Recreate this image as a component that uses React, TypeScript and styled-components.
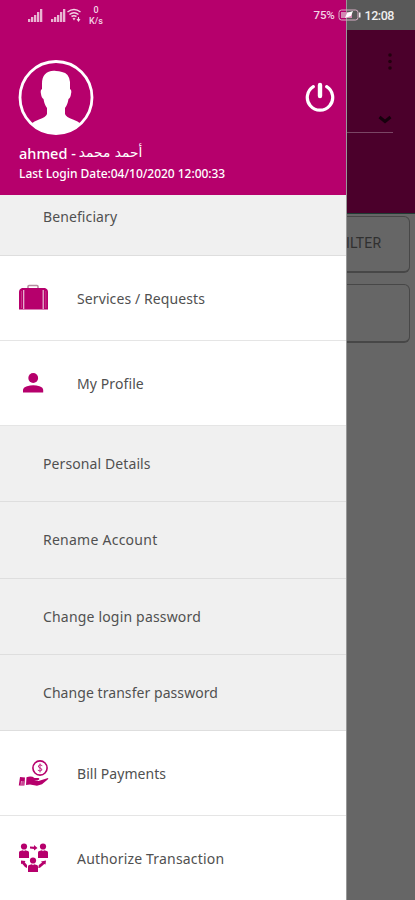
import React from 'react';
import styled, { createGlobalStyle } from 'styled-components';

const Global = createGlobalStyle`
  * { box-sizing: border-box; }
  body { margin: 0; font-family: "Noto Sans", "Open Sans", sans-serif; }
  svg { display: block; flex: none; }
`;

const brand = '#b6006c';

const Screen = styled.div`
  position: relative;
  width: 415px;
  height: 900px;
  overflow: hidden;
  background: #666;
`;

const StatusBar = styled.div`
  position: absolute;
  z-index: 3;
  inset: 0 0 auto 0;
  height: 30px;
  padding: 0 21px 0 28px;
  display: flex;
  align-items: center;
  color: #f3d4e5;
  font-family: Roboto, sans-serif;
`;
const Speed = styled.div`
  width: 18px;
  margin-left: 4px;
  font-size: 9px;
  font-weight: 500;
  line-height: 11px;
  text-align: center;
  padding-top: 1px;
`;
const Battery = styled.div`
  margin-left: auto;
  font-size: 11.5px;
  font-weight: 500;
  letter-spacing: -0.2px;
  margin-right: 3px;
`;
const Clock = styled.div`
  margin-left: 4px;
  font-size: 12.5px;
  font-weight: 500;
  letter-spacing: -0.45px;
  color: #eee;
`;

const Backdrop = styled.div`
  height: 100%;
  padding-left: 347px;
  display: flex;
  flex-direction: column;
`;
const DimStatus = styled.div`
  height: 30px;
  background: #595959;
`;
const DimToolbar = styled.div`
  height: 184px;
  background: #4b002b;
  border-bottom: 1px solid #203b33;
  display: flex;
  flex-direction: column;
`;
const MenuDots = styled.div`
  padding: 22px 0 0 40px;
`;
const SelectLine = styled.div`
  width: 46px;
  height: 29px;
  margin-top: 34px;
  padding: 11px 0 0 31px;
  border-bottom: 1px solid #7a4665;
`;
const DimCard = styled.div<{ $top: number; $height: number }>`
  width: 63px;
  height: ${p => p.$height}px;
  margin-top: ${p => p.$top}px;
  border: 1px solid #474747;
  border-left: 0;
  border-bottom-width: 2px;
  border-radius: 0 6px 6px 0;
  display: flex;
  align-items: center;
  color: #303030;
  font-family: Roboto, sans-serif;
  font-size: 14px;
  letter-spacing: 0.2px;
`;
const FilterText = styled.span`
  margin-left: -9px;
  padding-bottom: 2px;
`;

const Drawer = styled.aside`
  position: absolute;
  z-index: 2;
  inset: 0 auto 0 0;
  width: 347px;
  display: flex;
  flex-direction: column;
  background: #fff;
  border-right: 1px solid #989898;
  overflow: hidden;
`;
const Header = styled.header`
  flex: none;
  height: 195px;
  margin-right: -1px;
  background: ${brand};
  color: #fff;
  padding: 60px 12px 0 18px;
`;
const HeaderTop = styled.div`
  display: flex;
  justify-content: space-between;
  height: 76px;
`;
const PowerButton = styled.div`
  padding-top: 21px;
`;
const UserName = styled.div`
  display: flex;
  gap: 3px;
  margin-top: 7px;
  padding-left: 1px;
  height: 20px;
  line-height: 20px;
  font-size: 14.5px;
  font-weight: 500;
`;
const ArabicName = styled.span`
  font-family: "DejaVu Sans", sans-serif;
  font-size: 13.8px;
  line-height: 18px;
`;
const LastLogin = styled.div`
  padding-left: 1px;
  line-height: 21px;
  font-size: 12px;
  font-weight: 500;
  letter-spacing: -0.03px;
  white-space: nowrap;
`;

const Menu = styled.nav`
  flex: 1;
  min-height: 0;
  display: flex;
  flex-direction: column;
  overflow: hidden;
  color: #505050;
  font-size: 14px;
`;
const SubItem = styled.div<{ $clipped?: boolean }>`
  flex: none;
  height: 76.25px;
  margin-top: ${p => (p.$clipped ? -15.25 : 0)}px;
  padding-left: 43px;
  padding-bottom: ${p => (p.$clipped ? 1 : 0)}px;
  display: flex;
  align-items: center;
  background: #f0f0f0;
  border-bottom: 1px solid #dedede;
`;
const Item = styled.div`
  flex: none;
  height: 85px;
  padding-left: 18px;
  display: flex;
  align-items: center;
  gap: 28px;
  border-bottom: 1px solid #e5e5e5;
`;
const Label = styled.span<{ $spacing?: number }>`
  white-space: nowrap;
  letter-spacing: ${p => p.$spacing ?? 0.1}px;
`;

const Signal = () => (
  <svg width="15" height="13" viewBox="0 0 15 13" fill="#e9b5d2">
    <path d="M0 10h2.300v3H0zM3 8h2.300v5H3zM6 6h2.300v7H6zM9 3h2.300v10H9zM12 0h2.300v13H12z" />
  </svg>
);
const SignalGap = styled.div`
  width: 8px;
`;
const Wifi = () => (
  <svg width="17" height="14" viewBox="0 0 17 14" fill="none" stroke="#f3d4e5" strokeWidth="1.500">
    <path d="M1.500 4Q8 -1 14.500 4M3.500 6.500Q8 3 12.500 6.500M5.500 8.500Q8 7 10.500 8.500" />
    <path d="M7 10l1 1.500 1-1.500M12.500 9v4M11 11l1.500 2 1.500-2" strokeWidth="1.100" />
  </svg>
);
const BatteryIcon = () => (
  <svg width="23" height="12" viewBox="0 0 23 12">
    <rect x="1" y="1" width="19" height="10" rx="2.500" fill="none" stroke="#d9b0c7" />
    <rect x="3" y="3" width="11" height="6" fill="#d28ab3" />
    <path d="M21 3.500h1.500v5H21z" fill="#eee" />
    <path d="M7 9l2-5 6-2-2 5z" fill="#fff" />
  </svg>
);
const Avatar = () => (
  <svg width="76" height="76" viewBox="0 0 76 76">
    <circle cx="38" cy="37.500" r="36" fill="none" stroke="#fff" strokeWidth="2.800" />
    <path
      fill="#fff"
      d="M38 11C29 10 24 15 24 24V29Q22 30 23 34Q23.500 38 25.500 39Q26.500 45 29 48V54Q28 57 21 59.500Q16 61 13 64Q24 74 38 74Q52 74 63 64Q60 61 55 59.500Q48 57 47 54V48Q49.500 45 50.500 39Q52.500 38 53 34Q54 30 52 29V22Q51 13 44 12Q41 11 38 11Z"
    />
  </svg>
);
const Power = () => (
  <svg width="30" height="31" viewBox="0 0 30 31" fill="none" stroke="#fff" strokeLinecap="round">
    <path d="M8.300 5.700A12.700 12.700 0 1 0 21.700 5.700" strokeWidth="3.200" />
    <path d="M15 4v11" strokeWidth="4.400" />
  </svg>
);
const Dots = () => (
  <svg width="6" height="18" viewBox="0 0 6 18" fill="#23000f">
    <circle cx="3" cy="3" r="1.800" />
    <circle cx="3" cy="9.500" r="1.800" />
    <circle cx="3" cy="16" r="1.800" />
  </svg>
);
const Chevron = () => (
  <svg width="14" height="10" viewBox="0 0 14 10" fill="none" stroke="#17000d" strokeWidth="3">
    <path d="M1.500 2L7 6.500 12.500 2" />
  </svg>
);
const Suitcase = () => (
  <svg width="31" height="28" viewBox="0 0 31 28">
    <path d="M10 4.500V2.500q0-1 1-1h8q1 0 1 1v2" fill="none" stroke="#b58b9e" strokeWidth="1.500" />
    <path d="M4 4h23q3 1 3 4v17.500H1V8q0-3 3-4z" fill={brand} />
    <path d="M5.700 6v19M25.200 6v19" stroke="#eac0d8" strokeWidth="1.200" />
    <path d="M3.500 7v17M27.800 7v17" stroke="#cf5799" strokeWidth=".6" />
  </svg>
);
const Person = () => (
  <svg width="31" height="28" viewBox="0 0 31 28" fill={brand}>
    <circle cx="15.200" cy="9" r="4.900" />
    <path d="M5 23.500V21Q5 18.500 9 17.200Q15.200 15.200 21.500 17.200Q25.200 18.500 25.200 21v2.500z" />
  </svg>
);
const MoneyHand = () => (
  <svg width="31" height="30" viewBox="0 0 31 30" fill={brand}>
    <circle cx="22" cy="10" r="7.100" fill="none" stroke={brand} strokeWidth="1.600" />
    <path d="M24.300 7.700Q22 6 20.500 7.700Q19.800 9.300 22 10Q24.700 10.800 23.700 12.300Q22.300 13.800 19.800 12.200M22 5.500v9" fill="none" stroke={brand} strokeWidth=".8" />
    <path d="M2 19l5 .5-.6 8H.8z" />
    <path d="M8.500 19.200q5-1.600 8 .8h4q2 1.300-.8 2.200h-3.500l4.300.7L30 20q1 .4-.6 1.800L24 26.200l-5 1.600-7-1.400-4 .5z" />
    <path d="M3 27l.5-4M5 27v-4" stroke="#f0c8df" strokeWidth=".7" />
  </svg>
);
const UserShape = ({ x, y }: { x: number; y: number }) => (
  <g transform={`translate(${x} ${y})`}>
    <circle cx="5" cy="3" r="3.100" />
    <path d="M0 14.500V9Q0 7.500 2 7.200L4 6.700l1 1 1-1 2 .5q2 .3 2 1.800v5.500z" />
  </g>
);
const Team = () => (
  <svg width="31" height="30" viewBox="0 0 31 30" fill={brand}>
    <UserShape x={1} y={0.5} />
    <UserShape x={20} y={0.5} />
    <UserShape x={10} y={14.5} />
    <path d="M12 3.500l4 .2V2l3.500 3L16 7.500V5.900l-4-.4z" />
    <path d="M3 17.500l4.500.5-.8 1.200L9 22v3L7 24l-3-3.500-1 .7zM28 17.500l-.5 4-1.200-.6L22 24.700l-1.700.3.500-3 3.200-2.500-1-1z" />
  </svg>
);

export default function App() {
  return (
    <Screen>
      <Global />
      <StatusBar>
        <Signal />
        <SignalGap />
        <Signal />
        <Wifi />
        <Speed>0<br />K/s</Speed>
        <Battery>75%</Battery>
        <BatteryIcon />
        <Clock>12:08</Clock>
      </StatusBar>
      <Backdrop>
        <DimStatus />
        <DimToolbar>
          <MenuDots><Dots /></MenuDots>
          <SelectLine><Chevron /></SelectLine>
        </DimToolbar>
        <DimCard $top={2} $height={57}><FilterText>FILTER</FilterText></DimCard>
        <DimCard $top={11} $height={59} />
      </Backdrop>
      <Drawer>
        <Header>
          <HeaderTop>
            <Avatar />
            <PowerButton><Power /></PowerButton>
          </HeaderTop>
          <UserName>
            <span>ahmed -</span>
            <ArabicName dir="rtl">أحمد محمد</ArabicName>
          </UserName>
          <LastLogin>Last Login Date:04/10/2020 12:00:33</LastLogin>
        </Header>
        <Menu>
          <SubItem $clipped><Label>Beneficiary</Label></SubItem>
          <Item><Suitcase /><Label>Services / Requests</Label></Item>
          <Item><Person /><Label>My Profile</Label></Item>
          <SubItem><Label>Personal Details</Label></SubItem>
          <SubItem><Label $spacing={0.25}>Rename Account</Label></SubItem>
          <SubItem><Label $spacing={0.18}>Change login password</Label></SubItem>
          <SubItem><Label $spacing={0.06}>Change transfer password</Label></SubItem>
          <Item><MoneyHand /><Label $spacing={0.05}>Bill Payments</Label></Item>
          <Item><Team /><Label $spacing={0.18}>Authorize Transaction</Label></Item>
        </Menu>
      </Drawer>
    </Screen>
  );
}
